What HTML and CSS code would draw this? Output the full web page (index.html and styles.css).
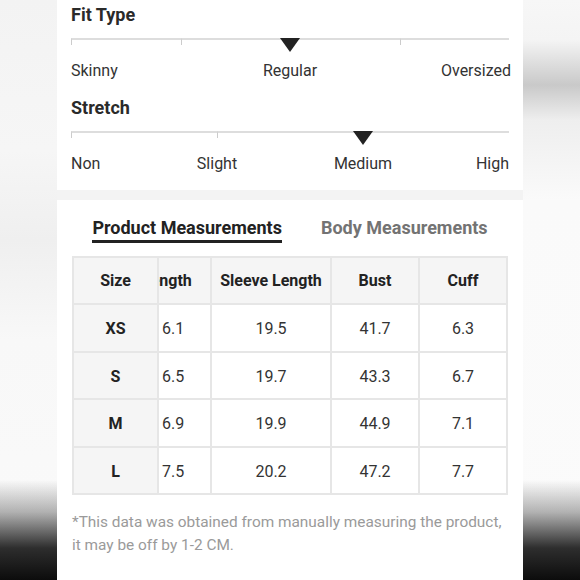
FILE: index.html
```html
<!DOCTYPE html>
<html lang="en">
<head>
<meta charset="utf-8">
<title>Size Guide</title>
<link rel="stylesheet" href="styles.css">
</head>
<body>
<div class="panel">
  <section class="card fit-card">
    <div class="scale">
      <h3 class="scale-title">Fit Type</h3>
      <div class="track">
        <span class="seg"></span><span class="seg"></span><span class="seg"></span><span class="seg"></span>
        <span class="pointer" style="left:50%"></span>
      </div>
      <div class="labels labels-4">
        <span class="lab l-first">Skinny</span>
        <span class="lab l-c2">Regular</span>
        <span class="lab l-last4">Oversized</span>
      </div>
    </div>
    <div class="scale scale-second">
      <h3 class="scale-title">Stretch</h3>
      <div class="track">
        <span class="seg"></span><span class="seg"></span><span class="seg"></span>
        <span class="pointer" style="left:66.667%"></span>
      </div>
      <div class="labels labels-6">
        <span class="lab l-first">Non</span>
        <span class="lab l-c2">Slight</span>
        <span class="lab l-c4">Medium</span>
        <span class="lab l-last6">High</span>
      </div>
    </div>
  </section>

  <section class="card size-card">
    <div class="tabs">
      <span class="tab tab-active">Product Measurements</span>
      <span class="tab">Body Measurements</span>
    </div>
    <table class="size-table">
      <thead>
        <tr>
          <th class="c-size w1">Size</th>
          <th class="c-len w2"><span class="len-head">Length</span></th>
          <th class="w3">Sleeve Length</th>
          <th class="w4">Bust</th>
          <th class="w5">Cuff</th>
        </tr>
      </thead>
      <tbody>
        <tr><td class="c-size">XS</td><td class="c-len">6.1</td><td>19.5</td><td>41.7</td><td>6.3</td></tr>
        <tr><td class="c-size">S</td><td class="c-len">6.5</td><td>19.7</td><td>43.3</td><td>6.7</td></tr>
        <tr><td class="c-size">M</td><td class="c-len">6.9</td><td>19.9</td><td>44.9</td><td>7.1</td></tr>
        <tr><td class="c-size">L</td><td class="c-len">7.5</td><td>20.2</td><td>47.2</td><td>7.7</td></tr>
      </tbody>
    </table>
    <p class="note">*This data was obtained from manually measuring the product, it may be off by 1-2 CM.</p>
  </section>
</div>
</body>
</html>
```

FILE: styles.css
```css
* { box-sizing: border-box; }

html, body {
  margin: 0;
  padding: 0;
  height: 100%;
}

body {
  font-family: Roboto, "Noto Sans", "Liberation Sans", sans-serif;
  color: #333;
  overflow: hidden;
  background:
    linear-gradient(to bottom, rgba(10,10,10,0) 0, rgba(10,10,10,0) 480px, rgba(10,10,10,0.3) 512px, rgba(10,10,10,0.85) 548px, #0c0c0c 580px),
    linear-gradient(to bottom, #f7f7f7 0, #f4f4f4 40px, #c9c9c9 85px, #eeeeee 120px, #fafafa 200px, #fbfbfb 100%) right top / 57px 100% no-repeat,
    linear-gradient(to bottom, #f3f3f3 0, #f6f6f6 150px, #efefef 240px, #f8f8f8 340px, #fafafa 100%);
}

.panel {
  width: 466px;
  height: 580px;
  margin: 0 auto;
  background: #f3f3f3;
  display: flex;
  flex-direction: column;
  gap: 10px;
}

.card {
  background: #ffffff;
  padding: 0 14px;
}

.fit-card {
  padding: 4px 14px 16px;
}

.scale-second {
  margin-top: 16px;
}

.scale-title {
  margin: 0;
  font-size: 18px;
  line-height: 22px;
  font-weight: 700;
  color: #2a2a2a;
}

.track {
  position: relative;
  display: flex;
  height: 7px;
  margin-top: 12px;
}

.seg {
  flex: 1;
  border-top: 2px solid #dddddd;
  border-left: 1px solid #cccccc;
}

.seg:last-of-type {
  border-right: 1px solid #cccccc;
}

.pointer {
  position: absolute;
  top: 0;
  width: 0;
  height: 0;
  border-left: 10px solid transparent;
  border-right: 10px solid transparent;
  border-top: 14px solid #222222;
  transform: translateX(-50%);
}

.labels {
  display: grid;
  margin-top: 16px;
  font-size: 16px;
  line-height: 20px;
  color: #333;
}

.labels-4 { grid-template-columns: repeat(4, 1fr); }
.labels-6 { grid-template-columns: repeat(6, 1fr); }

.lab { white-space: nowrap; }
.l-first { grid-column: 1; justify-self: start; }
.l-c2 { grid-column: 2 / span 2; justify-self: center; }
.l-c4 { grid-column: 4 / span 2; justify-self: center; }
.l-last4 { grid-column: 4; justify-self: end; margin-right: -2px; }
.l-last6 { grid-column: 6; justify-self: end; }

.size-card {
  flex: 1;
  padding-top: 17px;
}

.tabs {
  display: flex;
  justify-content: center;
  gap: 39px;
}

.tab {
  font-size: 18px;
  line-height: 22px;
  font-weight: 700;
  color: #737373;
  padding-bottom: 1px;
  border-bottom: 3px solid transparent;
  white-space: nowrap;
}

.tab-active {
  color: #222222;
  border-bottom-color: #222222;
}

.size-table {
  width: 436px;
  margin: 13px 0 0 1px;
  border-collapse: separate;
  border-spacing: 0;
  table-layout: fixed;
  border-top: 2px solid #e6e6e6;
  border-left: 2px solid #e6e6e6;
  font-size: 16px;
}

.size-table th,
.size-table td {
  padding: 0;
  text-align: center;
  white-space: nowrap;
  overflow: hidden;
  border-right: 2px solid #e6e6e6;
  border-bottom: 2px solid #e6e6e6;
}

.size-table thead tr { height: 47px; }
.size-table tbody tr { height: 47.5px; }

.size-table th {
  background: #f5f5f5;
  font-weight: 700;
  color: #222222;
}

.size-table td {
  color: #333333;
  background: #ffffff;
  padding-top: 2px;
}

.size-table td.c-size {
  background: #f5f5f5;
  font-weight: 700;
  color: #222222;
}

.w1 { width: 85px; }
.w2 { width: 53px; }
.w3 { width: 120px; }
.w4 { width: 88px; }
.w5 { width: 88px; }

.size-table .c-len {
  text-align: left;
  padding-left: 3px;
}

.size-table th.c-len {
  padding-left: 0;
}

.len-head {
  display: inline-block;
  margin-left: -17px;
}

.note {
  margin: 16px 0 0 1px;
  font-size: 15.4px;
  line-height: 23px;
  color: #9a9a9a;
}
```
